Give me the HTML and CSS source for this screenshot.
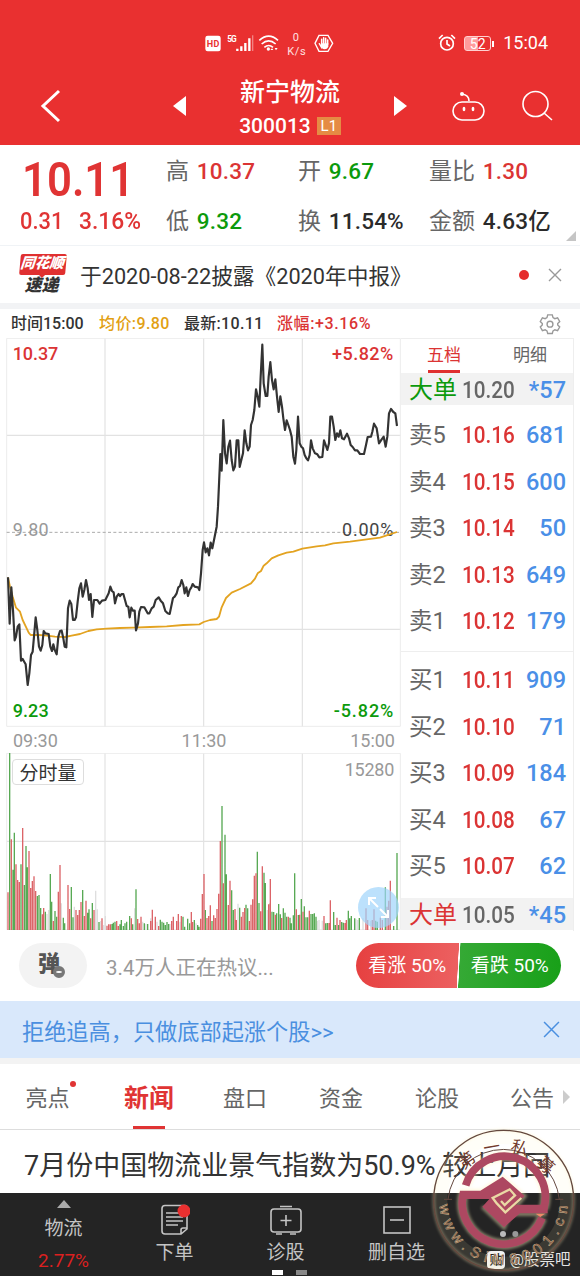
FILE: index.html
```html
<!DOCTYPE html>
<html lang="zh-CN">

<head>
    <meta charset="UTF-8">
    <meta name="viewport" content="width=device-width, initial-scale=1.0">
    <title>新宁物流 300013</title>
    <link rel="stylesheet" href="styles.css">
</head>

<body>
    <header class="header">
        <div class="status">
            <svg class="status-left" viewBox="0 0 390 78" width="130" height="26">
                <rect x="1" y="11" width="46" height="47" rx="7" fill="#fff" />
                <text x="5" y="44" font-size="27" font-weight="700" fill="#e93030" textLength="38">HD</text>
                <text x="67" y="31" font-size="25" font-weight="700" fill="#fff" textLength="28">5G</text>
                <path d="M97 57v-7M109 57V43M121 57V33M133 57V19" stroke="#fff" stroke-width="7" />
                <path d="M143 57V10" stroke="#ffffff66" stroke-width="4" />
                <path d="M163 25Q191 0 219 25M170 36Q191 17 212 36M178 46Q191 35 204 46" stroke="#fff" stroke-width="5" fill="none" />
                <circle cx="190" cy="51" r="5" fill="#fff" />
                <path d="M201 49l-5 5h9zM213 55l-4-7h9z" fill="#fff" />
                <text x="263" y="26" font-size="33" fill="#ffe0e0">0</text>
                <text x="247" y="69" font-size="33" fill="#ffe0e0" textLength="55">K/s</text>
                <path d="M342 10h27l14 24-14 24h-27l-12-24z" fill="none" stroke="#fff" stroke-width="4" />
                <path d="M343 35l8 13M350 35V22M356 34V17M362 35V19M368 37V24" fill="none" stroke="#fff" stroke-width="4.500" stroke-linecap="round" />
                <path d="M348 34h22v9q-2 9-11 9-6 0-11-9z" fill="#fff" />
            </svg>
            <div class="status-right">
                <svg viewBox="0 0 54 54" width="18" height="18" fill="none" stroke="#fff" stroke-width="5">
                    <circle cx="27" cy="29" r="19" />
                    <path d="M27 18v12l9 6M3 14L14 3M51 14L40 3" />
                </svg>
                <span class="battery">52</span>
                <span class="clock">15:04</span>
            </div>
        </div>
        <div class="title-bar">
            <svg class="back" viewBox="0 0 22 34" width="22" height="34"><path d="M19 2L3 17l16 15" /></svg>
            <i class="prev"></i>
            <div class="stock">
                <div class="stock-name">新宁物流</div>
                <div class="stock-code">300013<span class="level">L1</span></div>
            </div>
            <i class="next"></i>
            <svg class="robot" viewBox="0 0 34 32" width="34" height="32">
                <rect x="2" y="12" width="31" height="18" rx="9" />
                <path d="M18 11Q18 5 11 4" />
                <circle class="dot" cx="11" cy="4" r="2" />
                <ellipse class="dot" cx="13" cy="19" rx="1.400" ry="2.200" />
                <ellipse class="dot" cx="22" cy="19" rx="1.400" ry="2.200" />
            </svg>
            <svg class="search" viewBox="0 0 32 32" width="32" height="32">
                <circle cx="14.500" cy="14" r="12.500" />
                <path d="M23 23l8 7" />
            </svg>
        </div>
    </header>

    <section class="quote">
        <div class="now">
            <div class="now-price"><span>10.11</span></div>
            <div class="now-change"><span>0.31</span><span>3.16%</span></div>
        </div>
        <div class="cell c1">高 <b class="red">10.37</b></div>
        <div class="cell c2">开 <b class="green">9.67</b></div>
        <div class="cell c3">量比 <b class="red">1.30</b></div>
        <div class="cell c1">低 <b class="green">9.32</b></div>
        <div class="cell c2">换 <b>11.54%</b></div>
        <div class="cell c3">金额 <b>4.63亿</b></div>
        <i class="corner"></i>
    </section>

    <section class="notice">
        <div class="express">
            <span class="express-top">同花顺</span>
            <span class="express-bottom">速递</span>
        </div>
        <p>于2020-08-22披露《2020年中报》</p>
        <i class="red-dot"></i>
        <svg class="close" viewBox="0 0 14 14" width="14" height="14"><path d="M1 1l12 12M13 1L1 13" /></svg>
    </section>

    <section class="market">
        <div class="legend">
            <span class="l1">时间15:00</span>
            <span class="l2">均价:9.80</span>
            <span class="l3">最新:10.11</span>
            <span class="l4">涨幅:+3.16%</span>
            <svg class="gear" viewBox="0 0 24 24" width="22" height="22">
                <path d="M9.500 2h5l.8 3 2 1.200 3-.9 2.300 4-2.200 2.200v1.500l2.200 2.200-2.300 4-3-.9-2 1.200-.8 2.800h-5l-.8-2.800-2-1.200-3 .9-2.300-4 2.200-2.200v-1.500L1.400 9.300l2.300-4 3 .9 2-1.200z" />
                <circle cx="12" cy="12.200" r="3.200" />
            </svg>
        </div>
        <div class="market-body">
            <div class="charts">
                <!-- 分时走势 -->
                <svg class="price-chart" viewBox="18 84 1185 1167" width="395" height="389">
                    <path class="grid" d="M315 84V1251M611 84V1251M907 84V1251M20 376H1202M20 958H1202" />
                    <path class="frame" d="M20 85H1201V1249H20Z" />
                    <path class="dashed" d="M20 667H1202" />
                    <g class="label">
                        <text x="38" y="151" fill="#db3434" textLength="137">10.37</text>
                        <text class="mid" x="38" y="679" fill="#999" textLength="108">9.80</text>
                        <text x="38" y="1222" fill="#0c9a0c" textLength="108">9.23</text>
                        <text x="996" y="151" fill="#db3434" textLength="184">+5.82%</text>
                        <text class="mid" x="1026" y="679" fill="#444" textLength="154">0.00%</text>
                        <text x="1001" y="1222" fill="#0c9a0c" textLength="179">-5.82%</text>
                    </g>
                    <polyline class="avg" points="24,802 30,830 38,860 48,893 60,905 68,930 80,955 86,968 92,975 115,975 135,976 165,980 195,981 215,977 240,972 265,963 290,958 320,956 360,954 400,953 450,951 500,949 550,945 598,943 611,936 630,930 650,927 657,920 665,892 678,864 695,848 720,837 753,820 765,806 773,790 783,783 791,767 800,760 815,745 835,736 860,728 880,725 907,716 950,709 975,706 1000,700 1050,695 1100,688 1140,683 1160,676 1191,666" />
                    <polyline class="price" points="24,802 29,941 34,832 39,900 44,991 48,980 53,950 58,943 63,1052 68,1047 73,1056 77,1063 83,1125 88,1090 93,1035 98,1025 102,980 107,922 112,960 117,1010 122,1022 127,1005 131,963 136,970 146,972 151,1010 156,1023 160,1003 165,1022 170,1033 175,980 180,963 185,962 190,985 194,1010 199,1012 204,895 209,872 214,882 219,930 224,930 228,922 233,875 238,835 243,820 248,860 253,840 258,810 263,835 267,870 272,852 277,921 282,870 292,870 299,881 306,872 316,870 326,850 331,830 336,843 341,847 345,880 350,860 356,852 360,858 365,852 370,852 375,870 380,888 385,890 389,922 394,893 399,902 404,902 408,961 414,940 418,905 423,891 433,892 443,910 448,910 455,895 461,890 467,870 476,862 482,872 489,880 496,903 503,910 509,912 514,888 519,864 524,860 530,850 535,832 540,828 545,810 550,825 554,850 559,832 564,858 569,840 574,832 578,822 584,830 594,832 598,840 603,790 608,720 612,697 617,727 622,715 627,736 632,698 637,715 642,690 648,660 650,650 654,590 658,500 661,432 665,482 670,330 675,430 680,460 685,410 690,392 695,450 700,481 705,470 710,391 715,391 719,471 724,450 729,430 734,361 739,400 744,421 749,410 753,345 758,330 763,300 768,238 773,260 778,290 782,200 787,104 791,220 797,258 802,258 806,200 811,156 816,210 821,238 826,208 831,260 836,306 841,259 846,290 850,325 855,360 860,331 865,345 870,360 875,380 880,440 885,461 889,420 894,320 899,400 904,410 909,415 914,435 919,445 924,451 929,435 933,391 938,415 945,430 952,433 958,442 967,441 972,391 977,405 982,420 987,400 991,320 996,320 1001,350 1006,390 1011,370 1016,380 1021,361 1026,385 1032,388 1041,371 1047,385 1052,405 1058,411 1065,421 1072,421 1080,432 1092,432 1098,405 1103,381 1113,380 1117,365 1122,341 1130,355 1137,400 1145,388 1151,380 1157,410 1162,380 1167,310 1173,297 1180,306 1186,310 1191,348" />
                </svg>
                <div class="times"><span>09:30</span><span>11:30</span><span>15:00</span></div>
                <!-- 分时量 -->
                <div class="volume">
                    <svg viewBox="18 9 1185 531" width="395" height="177">
                        <path class="grid" d="M315 9V540M611 9V540M907 9V540M20 274H1202" />
                        <path class="frame" d="M20 10H1201V539H20Z" />
                        <path class="bar pale" d="M141 540V492M146 540V480M184 540V460M223 540V470M287 540V422M292 540V478M302 540V513M316 540V498M311 540V525M404 540V475M428 540V515M438 540V522M452 540V505M471 540V515M510 540V522M540 540V515M588 540V520M714 540V461M763 540V490M802 540V480M952 540V512M957 540V510M967 540V512M1068 540V508M1073 540V510M1089 540V505M1112 540V512" />
                        <path class="bar down" d="M29 540V9M39 540V359M43 540V248M63 540V343M73 540V405M78 540V288M82 540V352M112 540V438M117 540V435M122 540V474M136 540V485M151 540V372M155 540V455M165 540V483M170 540V500M190 540V503M194 540V520M214 540V411M219 540V502M248 540V420M263 540V488M267 540V478M277 540V459M297 540V516M336 540V522M340 540V518M345 540V515M360 540V523M364 540V510M370 540V528M375 540V520M380 540V515M389 540V498M398 540V523M408 540V418M433 540V520M443 540V522M481 540V509M486 540V515M491 540V518M496 540V525M501 540V516M506 540V522M549 540V500M554 540V530M563 540V506M569 540V520M583 540V510M593 540V525M597 540V530M616 540V480M636 540V513M666 540V168M675 540V254M679 540V373M695 540V421M700 540V480M719 540V473M738 540V464M743 540V475M772 540V305M777 540V459M792 540V368M796 540V399M811 540V460M816 540V485M821 540V486M830 540V490M836 540V462M841 540V493M850 540V475M855 540V488M860 540V500M870 540V503M874 540V520M880 540V496M884 540V370M895 540V495M904 540V447M913 540V469M918 540V502M923 540V502M933 540V492M938 540V492M943 540V490M948 540V500M977 540V520M982 540V519M1001 540V486M1006 540V525M1016 540V525M1025 540V516M1030 540V518M1045 540V482M1049 540V505M1054 540V498M1064 540V505M1078 540V504M1127 540V512M1132 540V515M1156 540V412M1181 540V528M1191 540V309" />
                        <path class="bar up" d="M24 540V427M34 540V268M48 540V343M53 540V390M58 540V396M68 540V234M87 540V303M92 540V414M97 540V393M102 540V379M107 540V423M127 540V493M131 540V474M160 540V513M175 540V425M180 540V345M204 540V405M209 540V477M228 540V480M233 540V495M238 540V480M243 540V456M253 540V498M258 540V452M272 540V505M282 540V480M306 540V505M321 540V527M326 540V523M331 540V523M350 540V513M355 540V528M394 540V505M413 540V507M418 540V520M423 540V500M452 540V513M457 540V479M466 540V500M476 540V528M515 540V513M520 540V500M530 540V513M535 540V492M544 540V498M574 540V486M578 540V516M602 540V506M607 540V432M612 540V372M621 540V504M626 540V498M631 540V466M641 540V496M646 540V504M651 540V477M656 540V431M661 540V273M670 540V400M685 540V465M690 540V392M705 540V477M709 540V510M724 540V500M729 540V486M734 540V474M748 540V513M753 540V464M758 540V448M763 540V377M768 540V370M782 540V484M787 540V349M806 540V463M811 540V387M826 540V494M845 540V504M865 540V500M889 540V478M899 540V494M909 540V485M928 540V482M972 540V498M987 540V519M991 540V451M1011 540V503M1020 540V510M1035 540V519M1039 540V510M1098 540V475M1103 540V510M1117 540V510M1122 540V478M1141 540V503M1147 540V510M1161 540V470M1166 540V452M1171 540V392" />
                        <text class="vol-max" x="1034" y="77" textLength="149">15280</text>
                    </svg>
                    <span class="vol-tag">分时量</span>
                    <span class="expand">
                        <svg viewBox="0 0 24 24" width="24" height="24"><path d="M11 11L2 2M2 9V2h7M13 13l8 8M14 21h7v-7" /></svg>
                    </span>
                </div>
            </div>

            <div class="book">
                <div class="book-tabs"><span class="active">五档</span><span>明细</span></div>
                <div class="row big"><span class="green">大单</span><b>10.20</b><em>*57</em></div>
                <div class="asks">
                    <div class="row"><span>卖5</span><b>10.16</b><em>681</em></div>
                    <div class="row"><span>卖4</span><b>10.15</b><em>600</em></div>
                    <div class="row"><span>卖3</span><b>10.14</b><em>50</em></div>
                    <div class="row"><span>卖2</span><b>10.13</b><em>649</em></div>
                    <div class="row"><span>卖1</span><b>10.12</b><em>179</em></div>
                </div>
                <div class="bids">
                    <div class="row"><span>买1</span><b>10.11</b><em>909</em></div>
                    <div class="row"><span>买2</span><b>10.10</b><em>71</em></div>
                    <div class="row"><span>买3</span><b>10.09</b><em>184</em></div>
                    <div class="row"><span>买4</span><b>10.08</b><em>67</em></div>
                    <div class="row"><span>买5</span><b>10.07</b><em>62</em></div>
                </div>
                <div class="row big"><span class="red">大单</span><b>10.05</b><em>*45</em></div>
            </div>
        </div>
    </section>

    <section class="talk">
        <div class="danmu">弹<i></i></div>
        <span class="talk-text">3.4万人正在热议...</span>
        <div class="vote">
            <span class="bull">看涨 50%</span>
            <span class="bear">看跌 50%</span>
        </div>
    </section>

    <section class="ad">
        <span>拒绝追高，只做底部起涨个股&gt;&gt;</span>
        <svg class="close" viewBox="0 0 16 16" width="17" height="17"><path d="M1 1l14 14M15 1L1 15" /></svg>
    </section>

    <nav class="tabs">
        <span class="has-dot">亮点</span>
        <span class="active">新闻</span>
        <span>盘口</span>
        <span>资金</span>
        <span>论股</span>
        <span>公告</span>
        <i></i>
    </nav>

    <div class="news">7月份中国物流业景气指数为50.9% 较上月回</div>

    <footer class="toolbar">
        <div class="tool sector">
            <i></i>
            <span>物流</span>
            <strong>2.77%</strong>
        </div>
        <div class="tool">
            <svg viewBox="0 0 30 32" width="30" height="32">
                <path d="M5 1.500h20q2 0 2 2V25l-6 5H5q-3 0-3-3V4.500q0-3 3-3zM27 24h-4q-2 0-2 2v4M6 9h14M6 13h17M6 17h17M6 21h12" />
                <circle cx="24" cy="7" r="6.500" fill="#e93030" stroke="none" />
            </svg>
            <span>下单</span>
        </div>
        <div class="tool">
            <svg viewBox="0 0 34 32" width="34" height="32">
                <rect x="2" y="5" width="30" height="23" rx="3" />
                <path d="M11 2.500h12M17 11v11M11.500 16.500h11M7 30h6M21 30h6" />
            </svg>
            <span>诊股</span>
        </div>
        <div class="tool">
            <svg viewBox="0 0 30 32" width="30" height="32">
                <rect x="2" y="3" width="26" height="26" />
                <path d="M8 16h14" />
            </svg>
            <span>删自选</span>
        </div>
        <div class="pager"><i></i><i></i></div>
    </footer>

    <div class="tieba"><b>贴</b>@股票吧</div>

    <!-- 第一私募 水印 -->
    <svg class="seal" viewBox="0 0 540 618" width="180" height="206">
        <defs>
            <path id="seal-bottom" d="M118 391A193 193 0 0 0 504 391" />
            <filter id="glow" x="-20%" y="-20%" width="140%" height="140%"><feGaussianBlur stdDeviation="4" /></filter>
        </defs>
        <circle cx="311" cy="391" r="190" fill="none" stroke="#fff2bd" stroke-width="42" opacity=".1" />
        <g filter="url(#glow)" fill="none" stroke="#fff2bd" opacity=".45">
            <circle cx="311" cy="391" r="210" stroke-width="6" />
            <path d="M197 346A122 122 0 0 1 431 416M191 366A124 124 0 0 0 426 444" stroke-width="31" />
            <path d="M180 362H246L308 320 374 378 330 432H440M330 432L312 472 247 410" stroke-width="12" />
        </g>
        <circle cx="309" cy="492" r="9" fill="#bbb" />
        <circle cx="346" cy="492" r="9" fill="#999" />
        <circle cx="311" cy="391" r="210" fill="none" stroke="#64483e" stroke-width="4" />
        <path d="M144 388A168 168 0 0 1 478 388M132 388h24M466 388h24" fill="none" stroke="#64483e" stroke-width="3" />
        <g fill="none" stroke="#ad4861" stroke-width="23">
            <path d="M197 346A122 122 0 0 1 431 416" />
            <path d="M191 366A124 124 0 0 0 426 444" />
        </g>
        <path d="M180 362H241L308 320 374 378 346 404H443V430H360L312 472 247 410 268 387H181Z" fill="#ad4861" />
        <path d="M291 401L278 384 329 358 345 376 314 405 303 393M291 401L316 427 364 384" fill="none" stroke="#ead9a5" stroke-width="7" />
        <path d="M407 431h28l-14 10z" fill="#ef8b68" />
        <g class="seal-cn">
            <text transform="translate(211 285) rotate(-36)">第</text>
            <text transform="translate(278 249) rotate(-10)">一</text>
            <text transform="translate(354 250) rotate(14)">私</text>
            <text transform="translate(426 299) rotate(41)">募</text>
        </g>
        <text class="seal-url"><textPath href="#seal-bottom" startOffset="14" textLength="575">www.SiM8001.cn</textPath></text>
    </svg>
</body>

</html>
```
FILE: styles.css
```css
body {
    margin: 0;
    width: 580px;
    height: 1276px;
    position: relative;
    overflow: hidden;
    background-color: #fff;
    color: #333;
    font-family: Roboto, "Noto Sans CJK SC", sans-serif;
}

svg {
    display: block;
    flex-shrink: 0;
}

b,
em,
strong {
    font-weight: 500;
    font-style: normal;
}

p {
    margin: 0;
}

.red {
    color: #db3434;
}

.green {
    color: #0c9a0c;
}

/* header */
.header {
    height: 145px;
    background-color: #e93030;
    color: #fff;
}

.status {
    display: flex;
    justify-content: space-between;
    height: 64px;
    padding: 32px 32px 0 205px;
    box-sizing: border-box;
}

.status-right {
    display: flex;
    align-items: center;
    height: 22px;
}

.battery {
    position: relative;
    width: 25px;
    height: 13px;
    margin: 0 12px 0 8px;
    border: 1px solid #ffd0d0;
    border-radius: 3px;
    background: linear-gradient(90deg, #ff9c9c 52%, transparent 52%);
    font-size: 14px;
    line-height: 14px;
    text-align: center;
}

.battery::after {
    content: "";
    position: absolute;
    right: -4px;
    top: 4px;
    width: 2px;
    height: 6px;
    background-color: #fff;
}

.clock {
    font-size: 18px;
    line-height: 24px;
}

.title-bar {
    display: flex;
    align-items: center;
    height: 84px;
    padding-left: 40px;
}

.title-bar svg {
    fill: none;
    stroke: #fff;
    stroke-width: 1.6;
}

.title-bar .back {
    stroke-width: 3;
}

.title-bar .dot {
    fill: #fff;
    stroke: none;
}

.prev,
.next {
    border: 10px solid transparent;
}

.prev {
    margin-left: 111px;
    border-right: 13px solid #fff;
    border-left-width: 0;
}

.next {
    border-left: 13px solid #fff;
    border-right-width: 0;
}

.stock {
    width: 208px;
    text-align: center;
}

.stock-name {
    font-size: 25px;
    font-weight: 500;
    line-height: 34px;
    padding-top: 5px;
}

.stock-code {
    display: flex;
    justify-content: center;
    align-items: center;
    font-size: 21px;
    font-weight: 500;
    line-height: 32px;
}

.level {
    width: 24px;
    height: 18px;
    margin-left: 6px;
    background-color: #e58b44;
    font-size: 15px;
    font-weight: 400;
    line-height: 18px;
}

.robot {
    margin-left: 44px;
}

.search {
    margin-left: 36px;
}

/* quote */
.quote {
    position: relative;
    display: grid;
    grid-template-columns: 166px 132px 131px 1fr;
    grid-template-rows: 50px 50px;
    height: 101px;
    border-bottom: 1px solid #f0f3f6;
    box-sizing: border-box;
}

.now {
    grid-row: 1 / 3;
    color: #e03434;
}

.now-price {
    height: 60px;
    padding: 5px 0 0 22px;
    box-sizing: border-box;
    font-size: 48px;
    font-weight: 600;
    line-height: 59px;
}

.now-price span {
    display: inline-block;
    transform: scaleX(.91);
    transform-origin: left;
}

.now-change {
    display: flex;
    padding: 1px 0 0 20px;
    font-size: 23.5px;
    font-weight: 500;
    line-height: 30px;
}

.now-change span {
    transform: scaleX(.97);
    transform-origin: left;
}

.now-change span:first-child {
    width: 59px;
    transform: scaleX(.93);
}

.cell {
    font-size: 23px;
    line-height: 52px;
    color: #666;
    white-space: nowrap;
}

.cell b {
    margin-left: 2px;
    font-size: 22.5px;
    letter-spacing: .2px;
}

.cell b:not([class]) {
    color: #2a2a2a;
}

.corner {
    position: absolute;
    right: 4px;
    bottom: 4px;
    border: 5px solid #c5c5c5;
    border-top-color: transparent;
    border-left-color: transparent;
}

/* notice */
.notice {
    display: flex;
    align-items: center;
    height: 57px;
    padding: 0 18px 0 20px;
    border-bottom: 6px solid #f2f3f5;
}

.notice p {
    flex: 1;
    font-size: 21.7px;
    white-space: nowrap;
}

.express {
    width: 46px;
    margin-right: 14px;
    font-weight: 900;
    font-style: italic;
    text-align: center;
}

.express-top,
.express-bottom {
    display: block;
    font-size: 14.5px;
    line-height: 20px;
}

.express-top {
    position: relative;
    height: 21px;
    border-radius: 2px;
    background-color: #e03030;
    color: #fff;
    text-indent: -2px;
    transform: skewX(-5deg);
}

.express-top::after {
    content: "";
    position: absolute;
    left: 20px;
    top: 21px;
    border: 3px solid transparent;
    border-top-color: #e03030;
    border-bottom: none;
}

.express-bottom {
    font-size: 17px;
    text-indent: -3px;
}

.red-dot {
    width: 10px;
    height: 10px;
    margin-right: 19px;
    border-radius: 50%;
    background-color: #e52c2c;
}

.close {
    fill: none;
    stroke: #999;
    stroke-width: 1.4;
}

/* chart + order book */
.market {
    padding: 0 6px;
}

.legend {
    display: flex;
    align-items: center;
    height: 29px;
    padding: 0 13px 0 5px;
    font-size: 16px;
    font-weight: 500;
    line-height: 33px;
    white-space: nowrap;
}

.l1 {
    width: 88px;
}

.l2 {
    width: 85px;
    color: #e2a013;
    letter-spacing: .4px;
}

.l3 {
    width: 93px;
    letter-spacing: .3px;
}

.l4 {
    flex: 1;
    color: #db3434;
    letter-spacing: .6px;
}

.gear {
    fill: none;
    stroke: #999;
    stroke-width: 1.5;
}

.market-body {
    display: flex;
}

.charts {
    width: 395px;
}

.grid {
    fill: none;
    stroke: #e2e2e2;
    stroke-width: 3.5;
}

.frame {
    fill: none;
    stroke: #ececec;
    stroke-width: 3;
}

.dashed {
    stroke: #aaa;
    stroke-width: 3;
    stroke-dasharray: 9 7;
}

.label {
    font-size: 54px;
    font-weight: 500;
}

.label .mid {
    font-weight: 400;
}

.avg,
.price {
    fill: none;
    stroke-linejoin: round;
}

.avg {
    stroke: #e3a321;
    stroke-width: 5.5;
}

.price {
    stroke: #333;
    stroke-width: 6.5;
}

.times {
    display: flex;
    justify-content: space-between;
    height: 26px;
    padding: 0 6px 0 7px;
    font-size: 18px;
    line-height: 27px;
    color: #999;
}

.volume {
    position: relative;
}

.bar {
    fill: none;
    stroke-width: 4;
}

.up {
    stroke: #dc6468;
}

.down {
    stroke: #58a954;
}

.pale {
    stroke: #dedede;
}

.vol-max {
    fill: #999;
    font-size: 54px;
}

.vol-tag {
    position: absolute;
    left: 6px;
    top: 6px;
    width: 70px;
    height: 24px;
    border: 1px solid #ddd;
    border-radius: 4px;
    background-color: #fff;
    font-size: 19px;
    line-height: 27px;
    text-align: center;
}

.expand {
    position: absolute;
    right: 2px;
    bottom: 2px;
    width: 41px;
    height: 41px;
    display: flex;
    align-items: center;
    justify-content: center;
    border-radius: 50%;
    background-color: #9fd4fbb3;
}

.expand svg {
    fill: none;
    stroke: #fff;
    stroke-width: 2;
}

.book {
    flex: 1;
    height: 593px;
    border: 1px solid #eee;
    border-left: none;
    border-bottom: none;
    box-sizing: border-box;
}

.book-tabs {
    display: flex;
    height: 34px;
    font-size: 17px;
    line-height: 32px;
    color: #666;
    text-align: center;
}

.book-tabs span {
    flex: 1;
    position: relative;
}

.book-tabs .active {
    color: #db3434;
}

.book-tabs .active::after {
    content: "";
    position: absolute;
    left: 27px;
    bottom: 0;
    width: 32px;
    height: 3px;
    background-color: #e03030;
}

.row {
    display: flex;
    align-items: center;
    height: 46.5px;
    padding: 2px 7px 0 8px;
    box-sizing: border-box;
    font-size: 23.5px;
    line-height: 30px;
    color: #666;
}

.row span {
    width: 53px;
    white-space: nowrap;
}

.row b {
    width: 60px;
    color: #db3434;
    transform: scaleX(.88);
    transform-origin: left;
}

.row em {
    flex: 1;
    color: #4a8fe7;
    text-align: right;
}

.row.big {
    height: 32px;
    background-color: #f2f2f2;
}

.big span.green {
    color: #0c9a0c;
}

.big span {
    font-size: 24px;
}

.big span.red {
    color: #db3434;
}

.big b {
    color: #666;
}

.asks {
    height: 240px;
    padding-top: 6px;
    border-bottom: 1px solid #eee;
}

.bids {
    height: 242px;
    padding-top: 4px;
}

/* discussion */
.talk {
    display: flex;
    align-items: center;
    height: 69px;
    padding: 0 19px;
    margin-bottom: 1px;
}

.danmu {
    position: relative;
    width: 68px;
    height: 45px;
    margin-right: 19px;
    border-radius: 23px;
    background-color: #f3f3f3;
    font-size: 22px;
    font-weight: 900;
    line-height: 42px;
    text-align: center;
    text-indent: -8px;
    color: #555;
}

.danmu i {
    position: absolute;
    left: 34px;
    top: 23px;
    width: 6px;
    height: 2px;
    border: solid #777;
    border-width: 5px 3px;
    border-radius: 50%;
    background-color: #fff;
}

.talk-text {
    flex: 1;
    font-size: 20.5px;
    color: #999;
}

.vote {
    display: flex;
    width: 205px;
    height: 45px;
    border-radius: 23px;
    overflow: hidden;
    background: linear-gradient(93deg, #e64040, #ec6060 49.6%, #fff 49.8%, #fff 50.3%, #35a935 50.5%, #18a018);
    color: #fff;
    font-size: 19px;
    line-height: 45px;
    text-align: center;
}

.vote span {
    flex: 1;
}

.ad {
    display: flex;
    align-items: center;
    justify-content: space-between;
    height: 57px;
    padding: 0 20px 0 22px;
    border-bottom: 6px solid #f3f3f3;
    background-color: #d9e8fb;
    font-size: 22.2px;
    color: #4a8fe0;
}

.ad .close {
    stroke: #4a8fe0;
}

/* tabs */
.tabs {
    display: flex;
    align-items: center;
    height: 65px;
    border-bottom: 1px solid #ddd;
    font-size: 22px;
    line-height: 69px;
    color: #666;
}

.tabs span {
    position: relative;
    height: 65px;
    width: 84px;
    text-align: center;
}

.tabs span:first-child {
    width: 95px;
}

.tabs .active {
    width: 108px;
    font-size: 25px;
    font-weight: 700;
    color: #e03434;
}

.tabs span:nth-child(4) {
    width: 108px;
}

.tabs span:nth-child(6) {
    padding-left: 11px;
}

.tabs .active::after {
    content: "";
    position: absolute;
    left: 38px;
    bottom: 0;
    width: 32px;
    height: 3px;
    background-color: #e03434;
}

.has-dot::after {
    content: "";
    position: absolute;
    right: 19px;
    top: 17px;
    width: 6px;
    height: 6px;
    border-radius: 50%;
    background-color: #e03434;
}

.tabs i {
    margin-left: -11px;
    border: 7px solid transparent;
    border-left-color: #ccc;
    border-right: none;
}

.news {
    height: 63px;
    padding-left: 24px;
    font-size: 27px;
    line-height: 73px;
    white-space: nowrap;
    overflow: hidden;
}

/* bottom toolbar */
.toolbar {
    position: relative;
    display: flex;
    height: 83px;
    padding-left: 8px;
    background-color: #242424;
    color: #c4c4c4;
}

.tool {
    display: flex;
    flex-direction: column;
    align-items: center;
    width: 111px;
    padding-top: 11px;
    box-sizing: border-box;
    font-size: 19px;
    line-height: 34px;
}

.tool svg {
    fill: none;
    stroke: #c4c4c4;
    stroke-width: 1.6;
}

.sector {
    padding-top: 7px;
}

.sector i {
    border: 7px solid transparent;
    border-bottom: 8px solid #aaa;
    border-top: none;
}

.sector span {
    line-height: 42px;
}

.sector strong {
    font-size: 19px;
    font-weight: 400;
    line-height: 21px;
    color: #dc2020;
}

.pager {
    position: absolute;
    left: 272px;
    bottom: 1px;
    display: flex;
    gap: 13px;
}

.pager i {
    width: 11px;
    height: 5px;
    background-color: #fff;
}

.pager i + i {
    background-color: #888;
}

/* overlays */
.tieba {
    position: absolute;
    left: 487px;
    top: 1249px;
    display: flex;
    align-items: center;
    font-size: 15.5px;
    line-height: 22px;
    color: #e4e4e4;
}

.tieba b {
    width: 18px;
    height: 18px;
    margin-right: 5px;
    border-radius: 4px;
    background-color: #f1f1f1;
    color: #222;
    font-size: 13px;
    line-height: 17px;
    text-align: center;
}

.seal {
    position: absolute;
    left: 400px;
    top: 1070px;
}

.seal-cn {
    font-size: 50px;
    fill: #713a2c;
    text-anchor: middle;
}

.seal-url {
    font-family: "Liberation Sans", sans-serif;
    font-size: 45px;
    fill: #7d4a3a;
    stroke: #d9c49a;
    stroke-width: 1.2;
}
```
